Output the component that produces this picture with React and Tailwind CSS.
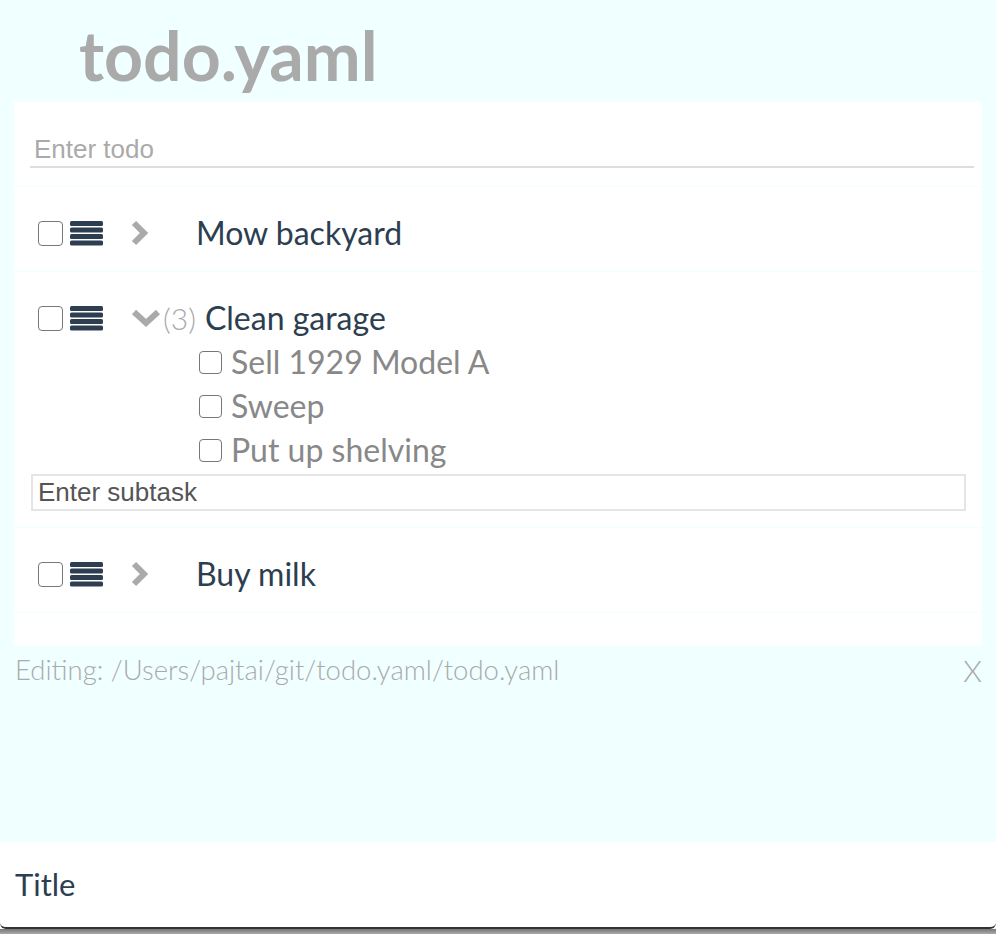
import React from 'react'

const subtasks = ['Sell 1929 Model A', 'Sweep', 'Put up shelving']

function Checkbox({ small }) {
  return (
    <span
      className={
        'inline-block shrink-0 rounded-[4px] border-[1.5px] border-[#777] bg-white ' +
        (small ? 'h-[23px] w-[23px]' : 'h-[25px] w-[25px]')
      }
    />
  )
}

function Handle() {
  return (
    <svg width="33" height="25" viewBox="0 0 33 25" className="shrink-0">
      <rect x="0" y="0" width="33" height="5" rx="1.5" fill="#2c3e50" />
      <rect x="0" y="6.5" width="33" height="5" rx="1.5" fill="#2c3e50" />
      <rect x="0" y="13" width="33" height="5" rx="1.5" fill="#2c3e50" />
      <rect x="0" y="19.5" width="33" height="5" rx="1.5" fill="#2c3e50" />
    </svg>
  )
}

function ChevronRight() {
  return (
    <svg width="20" height="26" viewBox="0 0 20 26" className="shrink-0">
      <polyline points="4,3 14,13 4,23" fill="none" stroke="#aaa" strokeWidth="6" />
    </svg>
  )
}

function ChevronDown() {
  return (
    <svg width="30" height="20" viewBox="0 0 30 20" className="shrink-0">
      <polyline points="3,4 15,15 27,4" fill="none" stroke="#aaa" strokeWidth="6" />
    </svg>
  )
}

function TodoRow({ title, children, count }) {
  return (
    <div className="border-b border-[#f0ffff] pb-4 pl-[24px] pr-4 pt-6">
      <div className="flex h-[44px] items-center">
        <Checkbox />
        <span className="ml-[7px]">
          <Handle />
        </span>
        {count ? (
          <>
            <span className="ml-[28px]">
              <ChevronDown />
            </span>
            <span className="ml-[2px] text-[30px] font-light text-[#aaa]">({count})</span>
            <span className="ml-[9px] text-[32px] text-[#2c3e50]">{title}</span>
          </>
        ) : (
          <>
            <span className="ml-[27px]">
              <ChevronRight />
            </span>
            <span className="ml-[46px] text-[32px] text-[#2c3e50]">{title}</span>
          </>
        )}
      </div>
      {children}
    </div>
  )
}

export default function App() {
  return (
    <div className="flex h-[934px] flex-col bg-[#f0ffff] font-['Lato',sans-serif]">
      {/* Header */}
      <div className="h-[102px] pl-[79px] pt-[21px]">
        <h1 className="text-[68px] font-bold leading-none text-[#aaa]">todo.yaml</h1>
      </div>

      {/* List panel */}
      <div className="mx-[14px] bg-white">
        <div className="h-[85px] border-b border-[#f0ffff] pl-4 pr-2 pt-[30px]">
          <input
            className="h-[36px] w-full border-b-2 border-[#ddd] px-[4px] font-['Liberation_Sans',sans-serif] text-[26px] text-[#555] outline-none placeholder:text-[#aaa]"
            placeholder="Enter todo"
          />
        </div>

        <TodoRow title="Mow backyard" />

        <TodoRow title="Clean garage" count={3}>
          <div className="pl-[161px]">
            {subtasks.map((s) => (
              <div key={s} className="flex h-[44px] items-center">
                <Checkbox small />
                <span className="ml-[9px] text-[32px] text-[#888]">{s}</span>
              </div>
            ))}
          </div>
          <input
            className="-ml-[7px] mt-[2px] h-[37px] w-[935px] border-2 border-[#e5e5e5] px-[5px] font-['Liberation_Sans',sans-serif] text-[26px] text-[#555] outline-none placeholder:text-[#555]"
            placeholder="Enter subtask"
          />
        </TodoRow>

        <TodoRow title="Buy milk" />

        <div className="h-[33px]" />
      </div>

      {/* Footer */}
      <div className="flex h-[48px] items-center justify-between pl-[15px] pr-[14px] text-[#aaa]">
        <span className="text-[27.5px] font-light">Editing: /Users/pajtai/git/todo.yaml/todo.yaml</span>
        <span className="text-[30px] font-light">X</span>
      </div>

      <div className="flex-1" />

      {/* Title bar */}
      <div className="flex h-[87px] items-center rounded-b-[6px] border-b-2 border-[#333] bg-white pl-[15px] text-[31px] text-[#2c3e50]">
        Title
      </div>
      <div className="h-[5px] bg-gradient-to-b from-[#777] to-[#aaa]" />
    </div>
  )
}
